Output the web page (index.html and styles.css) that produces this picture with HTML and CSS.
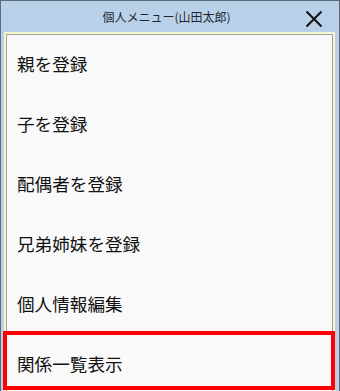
FILE: index.html
```html
<!DOCTYPE html>
<html lang="ja">
<head>
<meta charset="utf-8">
<title>個人メニュー</title>
<link rel="stylesheet" href="styles.css">
</head>
<body>
<div class="window">
  <div class="titlebar">
    <span class="title">個人メニュー(山田太郎)</span>
    <span class="close" aria-label="閉じる">
      <svg width="18" height="18" viewBox="0 0 18 18"><path d="M1.5 1.5 L16.5 16.5 M16.5 1.5 L1.5 16.5" stroke="#111" stroke-width="2" fill="none"/></svg>
    </span>
  </div>
  <div class="content">
    <div class="item">親を登録</div>
    <div class="item">子を登録</div>
    <div class="item">配偶者を登録</div>
    <div class="item">兄弟姉妹を登録</div>
    <div class="item">個人情報編集</div>
    <div class="item">関係一覧表示</div>
  </div>
  <div class="highlight"></div>
</div>
</body>
</html>
```
FILE: styles.css
```css
html, body {
  margin: 0;
  padding: 0;
  overflow: hidden;
}
body {
  width: 340px;
  height: 391px;
  font-family: "Noto Sans CJK JP", "Noto Sans", sans-serif;
}
.window {
  position: relative;
  box-sizing: border-box;
  width: 340px;
  height: 391px;
  overflow: hidden;
  background: #b9d1e8;
  border: 1px solid #5f6b78;
  border-bottom: none;
  padding: 0 4px 0 3px;
}
.titlebar {
  position: relative;
  height: 31px;
  display: flex;
  align-items: center;
  justify-content: center;
}
.title {
  font-size: 12px;
  color: #1e2530;
  margin-left: -6px;
  margin-top: -1px;
}
.close {
  position: absolute;
  right: 12px;
  top: 9px;
  width: 18px;
  height: 18px;
}
.close svg { display: block; }
.content {
  box-sizing: border-box;
  border: 2px solid #f6f6cf;
  border-bottom: none;
  background: #f9f9f9;
  height: 360px;
  box-shadow: inset 1px 1px 0 #a0a0a0, inset -1px 0 0 #a0a0a0;
  padding-top: 1px;
}
.item {
  box-sizing: border-box;
  height: 60px;
  display: flex;
  align-items: center;
  padding-left: 11px;
  padding-bottom: 3px;
  font-size: 17.6px;
  color: #111;
}
.highlight {
  position: absolute;
  left: 2px;
  top: 330px;
  width: 332px;
  height: 59px;
  box-sizing: border-box;
  border: 4px solid #ff0000;
}
```
